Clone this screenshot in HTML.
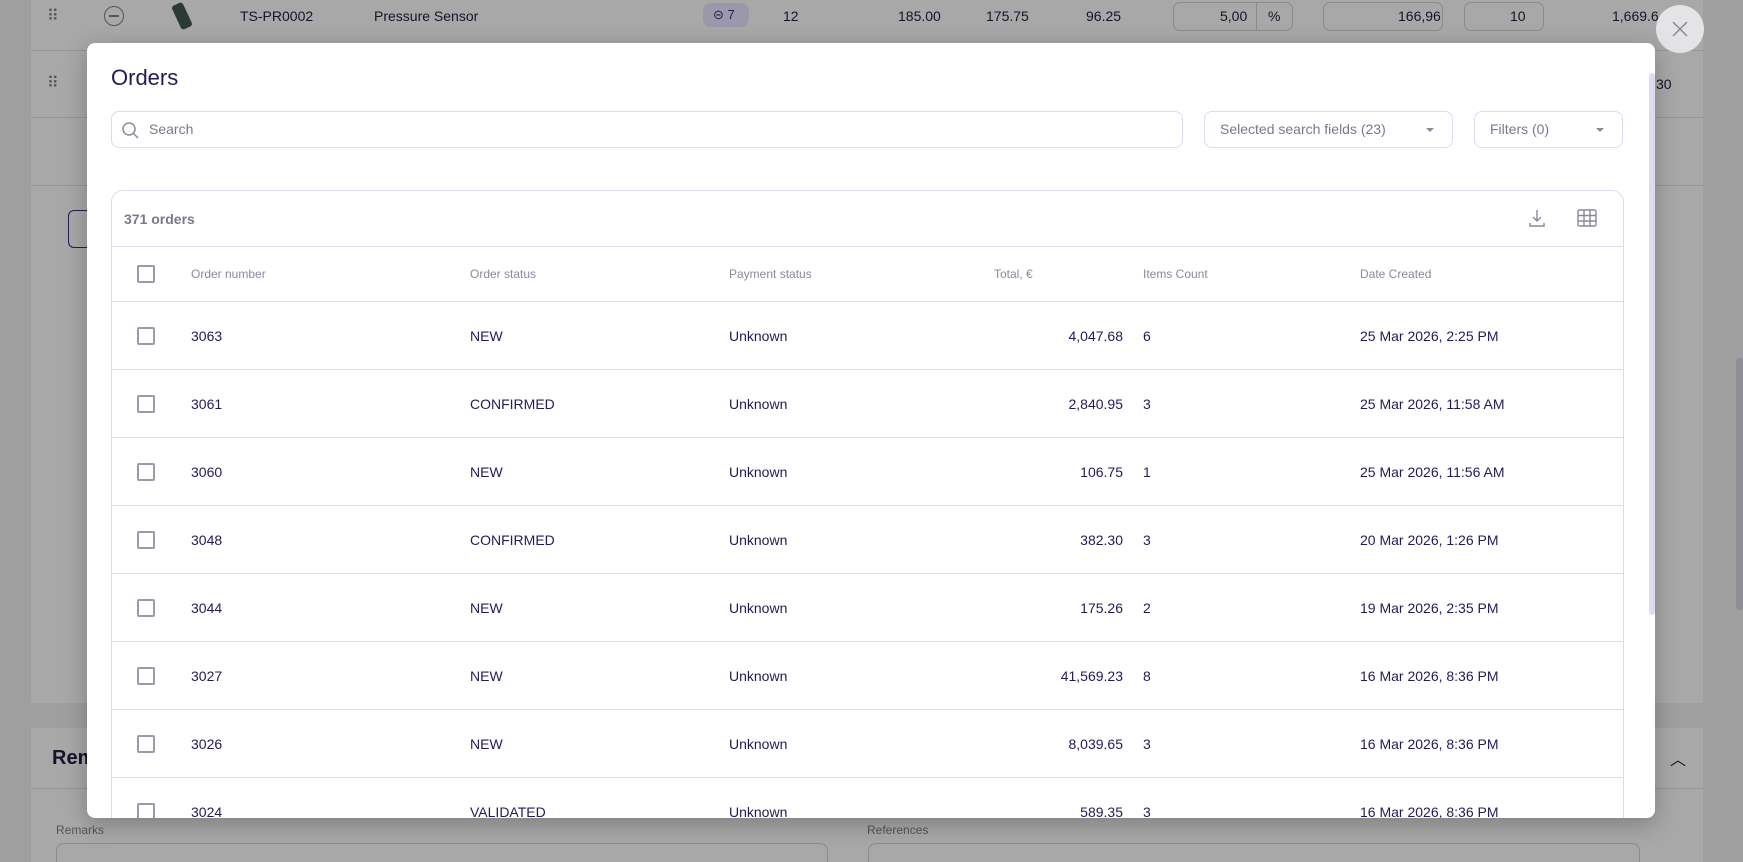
<!DOCTYPE html>
<html style="overflow:hidden;height:862px"><head><meta charset="utf-8">
<style>
*{box-sizing:border-box;margin:0;padding:0}
body{width:1743px;height:862px;overflow:hidden;background:#9f9f9f;font-family:"Liberation Sans",sans-serif;position:relative;color:#1f1a4d}
.abs{position:absolute}
.bgt{color:#15132a;font-size:14px}
.mod{position:absolute;left:87px;top:43px;width:1568px;height:775px;background:#fff;border-radius:8px;overflow:hidden;box-shadow:0 6px 24px rgba(0,0,0,.25)}
.inp{position:absolute;border:1px solid #dddcef;border-radius:8px;height:37px;font-size:14px;color:#7a7890;line-height:35px}
.caret{position:absolute;right:18px;top:16px;width:0;height:0;border-left:4px solid transparent;border-right:4px solid transparent;border-top:4px solid #8a889c}
.card{position:absolute;left:24px;top:147px;width:1513px;height:700px;border:1px solid #dddcef;border-radius:12px}
.row{position:absolute;left:0;width:1511px;height:68px;border-top:1px solid #dddcef;font-size:14px;color:#231b55}
.row span,.hd span{position:absolute;top:50%;transform:translateY(-50%);white-space:nowrap}
.cb{position:absolute;left:25px;top:50%;margin-top:-9px;width:18px;height:18px;border:2px solid #9c99ad;border-radius:2px}
.hd{position:absolute;left:0;top:55px;width:1511px;height:55px;border-top:1px solid #dddcef;font-size:12px;color:#8a889c}
</style></head><body>
<div class="abs" style="left:31px;top:0;width:1672px;height:703px;background:#a8a8a8"></div>
<div class="abs" style="left:31px;top:50px;width:1672px;height:1px;background:#969696"></div>
<div class="abs" style="left:31px;top:117px;width:1672px;height:1px;background:#969696"></div>
<div class="abs" style="left:31px;top:185px;width:1672px;height:1px;background:#969696"></div>
<div class="abs" style="left:31px;top:728px;width:1672px;height:134px;background:#a8a8a8"></div>
<div class="abs" style="left:31px;top:788px;width:1672px;height:1px;background:#969696"></div>
<div class="abs" style="left:1736px;top:358px;width:7px;height:252px;background:#8f8d96;border-radius:4px"></div>
<div class="abs bgt" style="left:47px;top:6px;font-size:16px;color:#555">⠿</div>
<div class="abs bgt" style="left:47px;top:73px;font-size:16px;color:#555">⠿</div>
<div class="abs" style="left:104px;top:6px;width:20px;height:20px;border:1.5px solid #555;border-radius:50%"></div>
<div class="abs" style="left:109px;top:15px;width:10px;height:1.5px;background:#555"></div>
<div class="abs" style="left:176px;top:3px;width:12px;height:26px;background:#2a3a36;border-radius:3px;transform:rotate(-25deg)"></div>
<div class="abs bgt" style="left:240px;top:8px">TS-PR0002</div>
<div class="abs bgt" style="left:374px;top:8px">Pressure Sensor</div>
<div class="abs" style="left:703px;top:3px;width:46px;height:24px;background:#9a98ab;border-radius:8px;font-size:13px;color:#231b55;line-height:24px;padding-left:10px">⊝ 7</div>
<div class="abs bgt" style="left:783px;top:8px">12</div>
<div class="abs bgt" style="left:898px;top:8px">185.00</div>
<div class="abs bgt" style="left:986px;top:8px">175.75</div>
<div class="abs bgt" style="left:1086px;top:8px">96.25</div>
<div class="abs" style="left:1173px;top:2px;width:120px;height:29px;border:1px solid #8c8c8c;border-radius:7px"></div>
<div class="abs" style="left:1256px;top:2px;width:1px;height:29px;background:#8c8c8c"></div>
<div class="abs bgt" style="left:1220px;top:8px">5,00</div>
<div class="abs bgt" style="left:1268px;top:8px">%</div>
<div class="abs" style="left:1323px;top:2px;width:120px;height:29px;border:1px solid #8c8c8c;border-radius:7px"></div>
<div class="abs bgt" style="left:1398px;top:8px">166,96</div>
<div class="abs" style="left:1464px;top:2px;width:80px;height:29px;border:1px solid #8c8c8c;border-radius:7px"></div>
<div class="abs bgt" style="left:1510px;top:8px">10</div>
<div class="abs bgt" style="left:1612px;top:8px">1,669.6</div>
<div class="abs bgt" style="left:1656px;top:76px">30</div>
<div class="abs" style="left:68px;top:210px;width:30px;height:38px;border:1.5px solid #231b55;border-radius:6px"></div>
<div class="abs bgt" style="left:52px;top:747px;font-size:20px;font-weight:bold">Remarks</div>
<div class="abs bgt" style="left:1670px;top:746px;font-size:16px">︿</div>
<div class="abs bgt" style="left:56px;top:823px;font-size:12px;color:#555">Remarks</div>
<div class="abs bgt" style="left:867px;top:823px;font-size:12px;color:#555">References</div>
<div class="abs" style="left:56px;top:843px;width:772px;height:19px;border:1px solid #8c8c8c;border-bottom:none;border-radius:8px 8px 0 0"></div>
<div class="abs" style="left:868px;top:843px;width:772px;height:19px;border:1px solid #8c8c8c;border-bottom:none;border-radius:8px 8px 0 0"></div>
<div class="abs" style="left:1656px;top:5px;width:48px;height:48px;border-radius:50%;background:#e4e4e6"></div>
<svg class="abs" style="left:1670px;top:19px" width="20" height="20" viewBox="0 0 20 20"><path d="M3 3L17 17M17 3L3 17" stroke="#8a889c" stroke-width="1.5"/></svg>
<div class="mod">
 <div class="abs" style="left:24px;top:22px;font-size:22px;color:#231b55">Orders</div>
 <div class="inp" style="left:24px;top:68px;width:1072px;padding-left:37px">Search</div>
 <svg class="abs" style="left:34px;top:78px" width="20" height="20" viewBox="0 0 20 20"><circle cx="8" cy="8" r="6" fill="none" stroke="#8a889c" stroke-width="1.5"/><path d="M12.5 12.5L17 17" stroke="#8a889c" stroke-width="1.5"/></svg>
 <div class="inp" style="left:1117px;top:68px;width:249px;padding-left:15px">Selected search fields (23)<i class="caret"></i></div>
 <div class="inp" style="left:1387px;top:68px;width:149px;padding-left:15px">Filters (0)<i class="caret"></i></div>
 <div class="abs" style="left:1562px;top:30px;width:6px;height:542px;background:#dddcef;border-radius:3px"></div>
 <div class="card">
  <div class="abs" style="left:12px;top:20px;font-size:14px;color:#7a7890;font-weight:bold">371 orders</div>
  <svg class="abs" style="left:1416px;top:17px" width="18" height="20" viewBox="0 0 18 20"><path d="M9 2V13M5 9L9 13L13 9M2 15V18H16V15" fill="none" stroke="#8a889c" stroke-width="1.4"/></svg>
  <svg class="abs" style="left:1465px;top:18px" width="20" height="18" viewBox="0 0 20 18"><rect x="1" y="1" width="18" height="16" rx="1.5" fill="none" stroke="#8a889c" stroke-width="1.4"/><path d="M7 1V17M13 1V17M1 6.5H19M1 12H19" stroke="#8a889c" stroke-width="1.4"/></svg>
  <div class="hd"><i class="cb"></i><span style="left:79px">Order number</span><span style="left:358px">Order status</span><span style="left:617px">Payment status</span><span style="left:882px">Total, €</span><span style="left:1031px">Items Count</span><span style="left:1248px">Date Created</span></div>
  <div class="row" style="top:110px"><i class="cb"></i><span style="left:79px">3063</span><span style="left:358px">NEW</span><span style="left:617px">Unknown</span><span style="right:500px">4,047.68</span><span style="left:1031px">6</span><span style="left:1248px">25 Mar 2026, 2:25 PM</span></div>
  <div class="row" style="top:178px"><i class="cb"></i><span style="left:79px">3061</span><span style="left:358px">CONFIRMED</span><span style="left:617px">Unknown</span><span style="right:500px">2,840.95</span><span style="left:1031px">3</span><span style="left:1248px">25 Mar 2026, 11:58 AM</span></div>
  <div class="row" style="top:246px"><i class="cb"></i><span style="left:79px">3060</span><span style="left:358px">NEW</span><span style="left:617px">Unknown</span><span style="right:500px">106.75</span><span style="left:1031px">1</span><span style="left:1248px">25 Mar 2026, 11:56 AM</span></div>
  <div class="row" style="top:314px"><i class="cb"></i><span style="left:79px">3048</span><span style="left:358px">CONFIRMED</span><span style="left:617px">Unknown</span><span style="right:500px">382.30</span><span style="left:1031px">3</span><span style="left:1248px">20 Mar 2026, 1:26 PM</span></div>
  <div class="row" style="top:382px"><i class="cb"></i><span style="left:79px">3044</span><span style="left:358px">NEW</span><span style="left:617px">Unknown</span><span style="right:500px">175.26</span><span style="left:1031px">2</span><span style="left:1248px">19 Mar 2026, 2:35 PM</span></div>
  <div class="row" style="top:450px"><i class="cb"></i><span style="left:79px">3027</span><span style="left:358px">NEW</span><span style="left:617px">Unknown</span><span style="right:500px">41,569.23</span><span style="left:1031px">8</span><span style="left:1248px">16 Mar 2026, 8:36 PM</span></div>
  <div class="row" style="top:518px"><i class="cb"></i><span style="left:79px">3026</span><span style="left:358px">NEW</span><span style="left:617px">Unknown</span><span style="right:500px">8,039.65</span><span style="left:1031px">3</span><span style="left:1248px">16 Mar 2026, 8:36 PM</span></div>
  <div class="row" style="top:586px"><i class="cb"></i><span style="left:79px">3024</span><span style="left:358px">VALIDATED</span><span style="left:617px">Unknown</span><span style="right:500px">589.35</span><span style="left:1031px">3</span><span style="left:1248px">16 Mar 2026, 8:36 PM</span></div>
 </div>
</div>
</body></html>
